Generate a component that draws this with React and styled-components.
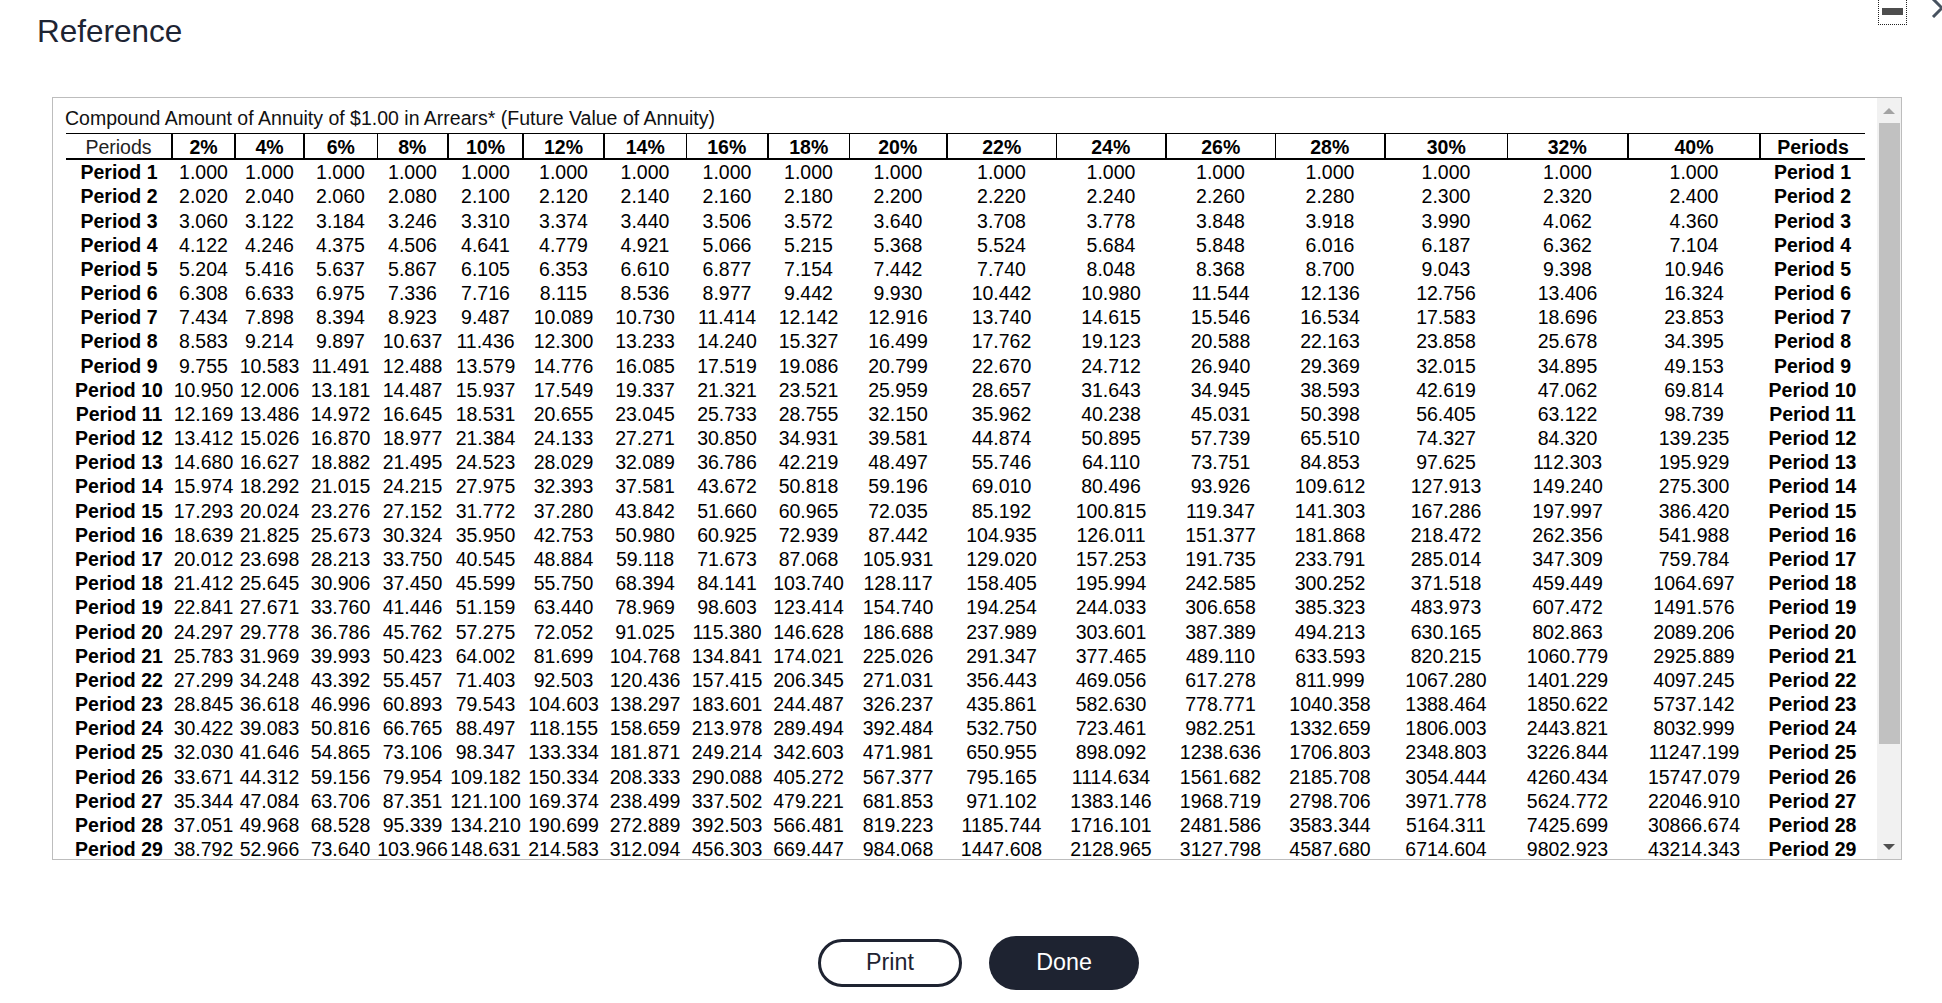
import styled, { createGlobalStyle } from "styled-components";

const GlobalStyle = createGlobalStyle`
  html, body {
    margin: 0;
    height: 100%;
    background: #fff;
    overflow: hidden;
  }
  body {
    font-family: "Liberation Sans", Arial, sans-serif;
  }
`;

const COLUMNS = [
  { label: "2%", width: 63, thick: true },
  { label: "4%", width: 69, thick: true },
  { label: "6%", width: 73, thick: true },
  { label: "8%", width: 71, thick: false },
  { label: "10%", width: 75, thick: true },
  { label: "12%", width: 81, thick: true },
  { label: "14%", width: 82, thick: true },
  { label: "16%", width: 82, thick: false },
  { label: "18%", width: 81, thick: true },
  { label: "20%", width: 98, thick: false },
  { label: "22%", width: 109, thick: true },
  { label: "24%", width: 110, thick: false },
  { label: "26%", width: 109, thick: true },
  { label: "28%", width: 110, thick: false },
  { label: "30%", width: 122, thick: true },
  { label: "32%", width: 121, thick: false },
  { label: "40%", width: 132, thick: true },
];

// the reference rows are 24.15px apart, which lands as a 25px row now and then
const TALL_ROWS = [1, 7, 13, 18, 24];

const ROWS = [
  "1.000 1.000 1.000 1.000 1.000 1.000 1.000 1.000 1.000 1.000 1.000 1.000 1.000 1.000 1.000 1.000 1.000",
  "2.020 2.040 2.060 2.080 2.100 2.120 2.140 2.160 2.180 2.200 2.220 2.240 2.260 2.280 2.300 2.320 2.400",
  "3.060 3.122 3.184 3.246 3.310 3.374 3.440 3.506 3.572 3.640 3.708 3.778 3.848 3.918 3.990 4.062 4.360",
  "4.122 4.246 4.375 4.506 4.641 4.779 4.921 5.066 5.215 5.368 5.524 5.684 5.848 6.016 6.187 6.362 7.104",
  "5.204 5.416 5.637 5.867 6.105 6.353 6.610 6.877 7.154 7.442 7.740 8.048 8.368 8.700 9.043 9.398 10.946",
  "6.308 6.633 6.975 7.336 7.716 8.115 8.536 8.977 9.442 9.930 10.442 10.980 11.544 12.136 12.756 13.406 16.324",
  "7.434 7.898 8.394 8.923 9.487 10.089 10.730 11.414 12.142 12.916 13.740 14.615 15.546 16.534 17.583 18.696 23.853",
  "8.583 9.214 9.897 10.637 11.436 12.300 13.233 14.240 15.327 16.499 17.762 19.123 20.588 22.163 23.858 25.678 34.395",
  "9.755 10.583 11.491 12.488 13.579 14.776 16.085 17.519 19.086 20.799 22.670 24.712 26.940 29.369 32.015 34.895 49.153",
  "10.950 12.006 13.181 14.487 15.937 17.549 19.337 21.321 23.521 25.959 28.657 31.643 34.945 38.593 42.619 47.062 69.814",
  "12.169 13.486 14.972 16.645 18.531 20.655 23.045 25.733 28.755 32.150 35.962 40.238 45.031 50.398 56.405 63.122 98.739",
  "13.412 15.026 16.870 18.977 21.384 24.133 27.271 30.850 34.931 39.581 44.874 50.895 57.739 65.510 74.327 84.320 139.235",
  "14.680 16.627 18.882 21.495 24.523 28.029 32.089 36.786 42.219 48.497 55.746 64.110 73.751 84.853 97.625 112.303 195.929",
  "15.974 18.292 21.015 24.215 27.975 32.393 37.581 43.672 50.818 59.196 69.010 80.496 93.926 109.612 127.913 149.240 275.300",
  "17.293 20.024 23.276 27.152 31.772 37.280 43.842 51.660 60.965 72.035 85.192 100.815 119.347 141.303 167.286 197.997 386.420",
  "18.639 21.825 25.673 30.324 35.950 42.753 50.980 60.925 72.939 87.442 104.935 126.011 151.377 181.868 218.472 262.356 541.988",
  "20.012 23.698 28.213 33.750 40.545 48.884 59.118 71.673 87.068 105.931 129.020 157.253 191.735 233.791 285.014 347.309 759.784",
  "21.412 25.645 30.906 37.450 45.599 55.750 68.394 84.141 103.740 128.117 158.405 195.994 242.585 300.252 371.518 459.449 1064.697",
  "22.841 27.671 33.760 41.446 51.159 63.440 78.969 98.603 123.414 154.740 194.254 244.033 306.658 385.323 483.973 607.472 1491.576",
  "24.297 29.778 36.786 45.762 57.275 72.052 91.025 115.380 146.628 186.688 237.989 303.601 387.389 494.213 630.165 802.863 2089.206",
  "25.783 31.969 39.993 50.423 64.002 81.699 104.768 134.841 174.021 225.026 291.347 377.465 489.110 633.593 820.215 1060.779 2925.889",
  "27.299 34.248 43.392 55.457 71.403 92.503 120.436 157.415 206.345 271.031 356.443 469.056 617.278 811.999 1067.280 1401.229 4097.245",
  "28.845 36.618 46.996 60.893 79.543 104.603 138.297 183.601 244.487 326.237 435.861 582.630 778.771 1040.358 1388.464 1850.622 5737.142",
  "30.422 39.083 50.816 66.765 88.497 118.155 158.659 213.978 289.494 392.484 532.750 723.461 982.251 1332.659 1806.003 2443.821 8032.999",
  "32.030 41.646 54.865 73.106 98.347 133.334 181.871 249.214 342.603 471.981 650.955 898.092 1238.636 1706.803 2348.803 3226.844 11247.199",
  "33.671 44.312 59.156 79.954 109.182 150.334 208.333 290.088 405.272 567.377 795.165 1114.634 1561.682 2185.708 3054.444 4260.434 15747.079",
  "35.344 47.084 63.706 87.351 121.100 169.374 238.499 337.502 479.221 681.853 971.102 1383.146 1968.719 2798.706 3971.778 5624.772 22046.910",
  "37.051 49.968 68.528 95.339 134.210 190.699 272.889 392.503 566.481 819.223 1185.744 1716.101 2481.586 3583.344 5164.311 7425.699 30866.674",
  "38.792 52.966 73.640 103.966 148.631 214.583 312.094 456.303 669.447 984.068 1447.608 2128.965 3127.798 4587.680 6714.604 9802.923 43214.343",
];

const Page = styled.div`
  display: flex;
  flex-direction: column;
  width: 1942px;
  height: 1003px;
`;

const Header = styled.header`
  display: flex;
  align-items: flex-start;
  justify-content: space-between;
  height: 97px;
  padding-left: 37px;
`;

const Title = styled.h1`
  margin: 13px 0 0;
  font-size: 31.5px;
  line-height: 36px;
  font-weight: 400;
  color: #1d2433;
`;

const WindowControls = styled.div`
  display: flex;
  align-items: flex-start;
  gap: 24px;
`;

const MinimizeButton = styled.button`
  display: flex;
  align-items: flex-start;
  justify-content: center;
  box-sizing: border-box;
  width: 29px;
  height: 25px;
  padding: 8px 0 0;
  background: none;
  border: 1px dotted #222;
  border-top: none;
`;

const MinimizeBar = styled.span`
  display: block;
  width: 21px;
  height: 7px;
  background: #4d4d4d;
`;

const CloseIcon = styled.svg`
  display: block;
  width: 11px;
  height: 18px;
`;

const Panel = styled.section`
  display: flex;
  box-sizing: border-box;
  width: 1850px;
  height: 763px;
  margin-left: 52px;
  border: 1px solid #bdbdbd;
`;

const TableArea = styled.div`
  flex: 1;
  min-width: 0;
  overflow: hidden;
  padding-left: 13px;
`;

const Caption = styled.div`
  height: 35px;
  margin-left: -1px;
  padding-top: 8px;
  box-sizing: border-box;
  font-size: 19.5px;
  line-height: 24px;
  color: #111;
  white-space: nowrap;
`;

const Grid = styled.table`
  table-layout: fixed;
  width: 1799px;
  border-collapse: collapse;
  font-size: 19.5px;
  color: #000;
`;

const HeadCell = styled.th`
  height: 23px;
  padding: 1px 0 0;
  font-size: inherit;
  line-height: 22px;
  text-align: center;
  white-space: nowrap;
  font-weight: ${(p) => (p.$plain ? 400 : 700)};
  color: ${(p) => (p.$plain ? "#222" : "#000")};
  border-top: 1px solid #000;
  border-bottom: 2px solid #000;
  border-left: ${(p) =>
    p.$first ? "none" : `${p.$thick ? 2 : 1}px solid #000`};
`;

const Row = styled.tr`
  height: ${(p) => (p.$tall ? 25 : 24)}px;
`;

const PeriodCell = styled.th`
  padding: 0;
  font-size: inherit;
  font-weight: 700;
  line-height: 24px;
  text-align: center;
  vertical-align: top;
  white-space: nowrap;
`;

const ValueCell = styled.td`
  padding: 0;
  line-height: 24px;
  text-align: center;
  vertical-align: top;
  white-space: nowrap;
`;

const Scrollbar = styled.div`
  display: flex;
  flex-direction: column;
  align-items: center;
  flex: none;
  width: 24px;
  background: #f1f1f1;
`;

const ArrowSlot = styled.div`
  display: flex;
  align-items: center;
  justify-content: center;
  flex: none;
  height: 25px;
`;

const Arrow = styled.span`
  width: 0;
  height: 0;
  border-left: 6px solid transparent;
  border-right: 6px solid transparent;
  border-bottom: ${(p) => (p.$up ? "6px solid #a3a3a3" : "none")};
  border-top: ${(p) => (p.$up ? "none" : "6px solid #505050")};
`;

const Thumb = styled.div`
  flex: none;
  width: 21px;
  height: 621px;
  background: #c1c1c1;
`;

const Spacer = styled.div`
  flex: 1;
`;

const Footer = styled.footer`
  display: flex;
  align-items: center;
  justify-content: center;
  gap: 27px;
  padding: 76px 0 0 15px;
`;

const PillButton = styled.button`
  box-sizing: border-box;
  width: ${(p) => (p.$primary ? "150px" : "144px")};
  height: ${(p) => (p.$primary ? "54px" : "48px")};
  border-radius: 27px;
  border: ${(p) => (p.$primary ? "none" : "3px solid #1e2331")};
  background: ${(p) => (p.$primary ? "#1e2331" : "#fff")};
  color: ${(p) => (p.$primary ? "#fff" : "#1e2331")};
  font-family: inherit;
  font-size: 23.3px;
  padding: 0 0 2px;
`;

export default function App() {
  return (
    <Page>
      <GlobalStyle />
      <Header>
        <Title>Reference</Title>
        <WindowControls>
          <MinimizeButton aria-label="Minimize">
            <MinimizeBar />
          </MinimizeButton>
          <CloseIcon viewBox="0 0 11 18">
            <path
              d="M2 -1 L11 8 L2 17"
              fill="none"
              stroke="#47525f"
              strokeWidth="3"
            />
          </CloseIcon>
        </WindowControls>
      </Header>
      <Panel>
        <TableArea>
          <Caption>
            Compound Amount of Annuity of $1.00 in Arrears* (Future Value of
            Annuity)
          </Caption>
          <Grid>
            <colgroup>
              <col style={{ width: 106 }} />
              {COLUMNS.map((c) => (
                <col key={c.label} style={{ width: c.width }} />
              ))}
              <col style={{ width: 105 }} />
            </colgroup>
            <thead>
              <tr>
                <HeadCell $plain $first>
                  Periods
                </HeadCell>
                {COLUMNS.map((c) => (
                  <HeadCell key={c.label} $thick={c.thick}>
                    {c.label}
                  </HeadCell>
                ))}
                <HeadCell $thick>Periods</HeadCell>
              </tr>
            </thead>
            <tbody>
              {ROWS.map((row, i) => (
                <Row key={i} $tall={TALL_ROWS.includes(i)}>
                  <PeriodCell>Period {i + 1}</PeriodCell>
                  {row.split(" ").map((value, j) => (
                    <ValueCell key={j}>{value}</ValueCell>
                  ))}
                  <PeriodCell>Period {i + 1}</PeriodCell>
                </Row>
              ))}
            </tbody>
          </Grid>
        </TableArea>
        <Scrollbar>
          <ArrowSlot>
            <Arrow $up />
          </ArrowSlot>
          <Thumb />
          <Spacer />
          <ArrowSlot>
            <Arrow />
          </ArrowSlot>
        </Scrollbar>
      </Panel>
      <Footer>
        <PillButton>Print</PillButton>
        <PillButton $primary>Done</PillButton>
      </Footer>
    </Page>
  );
}
